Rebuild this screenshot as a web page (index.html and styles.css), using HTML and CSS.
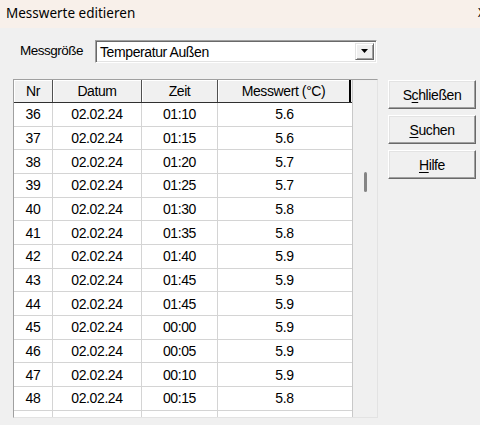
FILE: index.html
```html
<!DOCTYPE html>
<html lang="de">
<head>
<meta charset="utf-8">
<title>Messwerte editieren</title>
<link rel="stylesheet" href="styles.css">
</head>
<body>
<div class="window">
  <div class="titlebar">
    <span class="title">Messwerte editieren</span>
    <span class="close">X</span>
  </div>
  <div class="dialog">
    <div class="combo-row">
      <span class="combo-label">Messgröße</span>
      <div class="combo">
        <span class="combo-text">Temperatur Außen</span>
        <span class="combo-btn">
          <svg width="8" height="5" viewBox="0 0 8 5"><path d="M0 0h7l-3.5 4z" fill="#000"/></svg>
        </span>
      </div>
    </div>
    <div class="main">
      <div class="listbox">
        <div class="table">
          <div class="hrow">
            <div class="hcell c-nr">Nr</div>
            <div class="hcell c-dat">Datum</div>
            <div class="hcell c-zeit">Zeit</div>
            <div class="hcell c-wert last">Messwert (°C)</div>
          </div>
          <div class="row"><div class="cell c-nr">36</div><div class="cell c-dat">02.02.24</div><div class="cell c-zeit">01:10</div><div class="cell c-wert">5.6</div></div>
          <div class="row"><div class="cell c-nr">37</div><div class="cell c-dat">02.02.24</div><div class="cell c-zeit">01:15</div><div class="cell c-wert">5.6</div></div>
          <div class="row"><div class="cell c-nr">38</div><div class="cell c-dat">02.02.24</div><div class="cell c-zeit">01:20</div><div class="cell c-wert">5.7</div></div>
          <div class="row"><div class="cell c-nr">39</div><div class="cell c-dat">02.02.24</div><div class="cell c-zeit">01:25</div><div class="cell c-wert">5.7</div></div>
          <div class="row"><div class="cell c-nr">40</div><div class="cell c-dat">02.02.24</div><div class="cell c-zeit">01:30</div><div class="cell c-wert">5.8</div></div>
          <div class="row"><div class="cell c-nr">41</div><div class="cell c-dat">02.02.24</div><div class="cell c-zeit">01:35</div><div class="cell c-wert">5.8</div></div>
          <div class="row"><div class="cell c-nr">42</div><div class="cell c-dat">02.02.24</div><div class="cell c-zeit">01:40</div><div class="cell c-wert">5.9</div></div>
          <div class="row"><div class="cell c-nr">43</div><div class="cell c-dat">02.02.24</div><div class="cell c-zeit">01:45</div><div class="cell c-wert">5.9</div></div>
          <div class="row"><div class="cell c-nr">44</div><div class="cell c-dat">02.02.24</div><div class="cell c-zeit">01:45</div><div class="cell c-wert">5.9</div></div>
          <div class="row"><div class="cell c-nr">45</div><div class="cell c-dat">02.02.24</div><div class="cell c-zeit">00:00</div><div class="cell c-wert">5.9</div></div>
          <div class="row"><div class="cell c-nr">46</div><div class="cell c-dat">02.02.24</div><div class="cell c-zeit">00:05</div><div class="cell c-wert">5.9</div></div>
          <div class="row"><div class="cell c-nr">47</div><div class="cell c-dat">02.02.24</div><div class="cell c-zeit">00:10</div><div class="cell c-wert">5.9</div></div>
          <div class="row"><div class="cell c-nr">48</div><div class="cell c-dat">02.02.24</div><div class="cell c-zeit">00:15</div><div class="cell c-wert">5.8</div></div>
          <div class="row"><div class="cell c-nr"></div><div class="cell c-dat"></div><div class="cell c-zeit"></div><div class="cell c-wert"></div></div>
        </div>
        <div class="vscroll"><div class="thumb"></div></div>
      </div>
      <div class="buttons">
        <div class="btn">S<u>c</u>hließen</div>
        <div class="btn"><u>S</u>uchen</div>
        <div class="btn"><u>H</u>ilfe</div>
      </div>
    </div>
  </div>
</div>
</body>
</html>
```

FILE: styles.css
```css
html, body {
  margin: 0;
  padding: 0;
  width: 480px;
  height: 425px;
  overflow: hidden;
  background: #f0f0f0;
}

.window {
  width: 480px;
  height: 425px;
  display: flex;
  flex-direction: column;
  font-family: "Liberation Sans", Arial, sans-serif;
  font-size: 14px;
  color: #000;
}

.titlebar {
  height: 28px;
  flex: none;
  background: #f8f0ea;
  display: flex;
  align-items: center;
  padding-left: 6px;
  font-family: "Noto Sans", "Open Sans", sans-serif;
  font-size: 13.5px;
  color: #000;
}

.title {
  margin-top: -2px;
}

.close {
  margin-left: auto;
  margin-right: -5px;
  font-size: 12px;
  margin-top: -4px;
}

.dialog {
  flex: 1;
  display: flex;
  flex-direction: column;
  background: #f0f0f0;
}

.combo-row {
  display: flex;
  align-items: center;
  margin-top: 12px;
  height: 23px;
}

.combo-label {
  flex: none;
  width: 95px;
  padding-left: 20px;
  box-sizing: border-box;
  letter-spacing: -0.5px;
  font-size: 13.5px;
  margin-top: -2px;
}

.combo {
  flex: none;
  width: 282px;
  height: 23px;
  box-sizing: border-box;
  background: #fff;
  border-top: 1px solid #a0a0a0;
  border-left: 1px solid #a0a0a0;
  border-right: 1px solid #fff;
  border-bottom: 1px solid #fff;
  box-shadow: inset 1px 1px 0 #696969, inset -1px -1px 0 #e3e3e3;
  display: flex;
  align-items: center;
  padding: 2px 2px 2px 4px;
}

.combo-text {
  flex: 1;
  letter-spacing: -0.4px;
}

.combo-btn {
  width: 19px;
  height: 17px;
  box-sizing: border-box;
  background: #f0f0f0;
  border-top: 1px solid #e3e3e3;
  border-left: 1px solid #e3e3e3;
  border-right: 1px solid #696969;
  border-bottom: 1px solid #696969;
  box-shadow: inset 1px 1px 0 #fff, inset -1px -1px 0 #a0a0a0;
  display: flex;
  align-items: center;
  justify-content: center;
}

.main {
  display: flex;
  margin-top: 16px;
  align-items: flex-start;
}

.listbox {
  margin-left: 13px;
  width: 365px;
  height: 339px;
  box-sizing: border-box;
  border: 1px solid #a0a0a0;
  border-right-color: #e3e3e3;
  border-bottom-color: #e3e3e3;
  display: flex;
  overflow: hidden;
}

.table {
  width: 338px;
  flex: none;
  background: #fff;
  border-right: 1px solid #c8c8c8;
  overflow: hidden;
}

.hrow {
  display: flex;
  height: 23px;
  box-sizing: border-box;
  border-bottom: 1px solid #303030;
  background: #f0f0f0;
}

.hcell {
  box-sizing: border-box;
  border-right: 1px solid #505050;
  box-shadow: inset 1px 1px 0 #fff;
  display: flex;
  align-items: center;
  justify-content: center;
  letter-spacing: -0.4px;
}

.hcell.last {
  border-right: 2px solid #000;
}

.row {
  display: flex;
  height: 23.67px;
  box-sizing: border-box;
  border-bottom: 1px solid #d4d4d4;
}

.cell {
  box-sizing: border-box;
  border-right: 1px solid #d4d4d4;
  display: flex;
  align-items: center;
  justify-content: center;
  letter-spacing: -0.4px;
}

.c-nr { width: 39px; }
.c-dat { width: 89px; }
.c-zeit { width: 76px; }
.c-wert { width: 133px; }

.row .c-wert {
  border-right: none;
}

.vscroll {
  flex: 1;
  background: #f0f0f0;
  display: flex;
  flex-direction: column;
  align-items: center;
}

.thumb {
  margin-top: 92px;
  width: 3px;
  height: 20px;
  border-radius: 2px;
  background: #858585;
}

.buttons {
  margin-left: 10px;
  margin-top: 1px;
  display: flex;
  flex-direction: column;
  gap: 6px;
}

.btn {
  width: 88px;
  height: 29px;
  box-sizing: border-box;
  background: #f0f0f0;
  border-top: 1px solid #fff;
  border-left: 1px solid #fff;
  border-right: 1px solid #696969;
  border-bottom: 1px solid #696969;
  box-shadow: inset -1px -1px 0 #a0a0a0, inset 1px 1px 0 #e3e3e3;
  display: flex;
  align-items: center;
  justify-content: center;
  letter-spacing: -0.4px;
}

.btn u {
  text-decoration-thickness: 1px;
  text-underline-offset: 2px;
}
```
